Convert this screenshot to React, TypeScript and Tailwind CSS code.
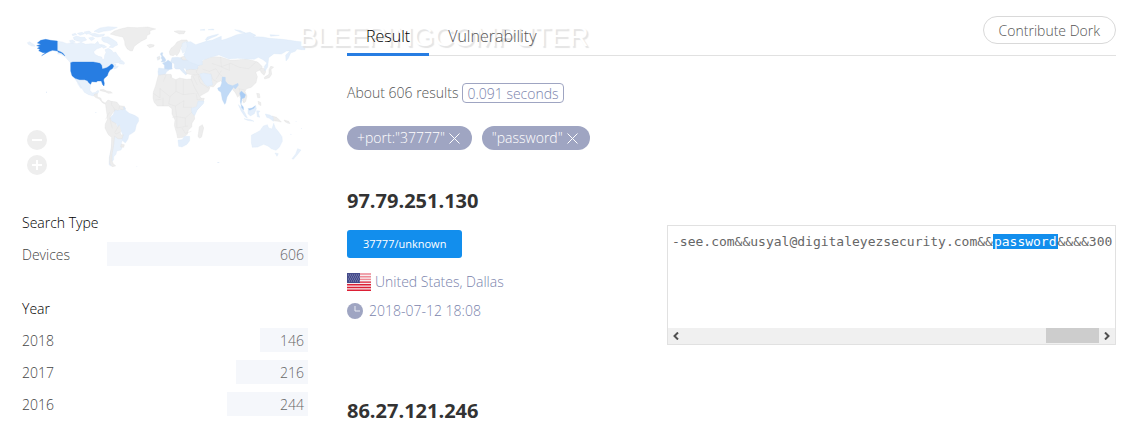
import React from "react";

const years = [
  { label: "2018", count: 146 },
  { label: "2017", count: 216 },
  { label: "2016", count: 244 },
];

const WorldMap = () => {
  return (
    <svg
      viewBox="36 30 858 450"
      className="block w-full"
      strokeLinejoin="round"
      role="img"
      aria-label="Results by country"
    >
      {/* Canada and the arctic islands */}
      <g fill="#e8f1fb" stroke="#dce8f5" strokeWidth="1">
        <path d="M143 94l14 2 14 5 14-3 16 3 12-4 14 6 16-2 12 1 8-8 5 9 10 1-4 8-14 5-9 8 3 8 12 6 9 2 3 8 5-3 1-10 4-8-3-9 10-4 10 6 6 7 6-2 6 10 7 8 4 8-8 6-11 1-8 4 11-1-1 8 8-2-4 6-9 3-3-5-6 0-7 6-12 3-8 4-2-10-7-7-18-4H186l-10-12-12-13-12-6-9-1z" />
        <path d="M190 82l10-4 12 4 12 0 6 8-14 5-14-2-10-4zM178 92l10-2 8 6-12 4zM186 73l10-3 4 4-12 3zM202 70l14-3 8 4-14 5zM222 66l16-3 6 6-16 4zM238 72l16-2 14 4 16-2-3 6-18 3-14-3zM236 84l12-3 6 5-10 6zM252 64l18-10 24-4 28 2-20 9-22 3-14 4zM276 82l18-2 14 8 12 8 3 9-8 3-6 5-12-1 6-6-12-8-10-2-6-6zM272 106l10-1 8 6-10 4z" />
        <path d="M328 157l8-6 8 8-2 4-14-2zM52 98l8-3 5 5 8 4 2 5-10-1-10-5z" />
        {/* Mexico */}
        <path d="M195 207l15 1 16 3 8 6 7 8-1 16 7 8 10-2 4-5 6 0-3 8-9 3-5 5-14-4-13-7-7-12-8-12-7-8zM200 211l5 4 10 20-3 0-8-12z" />
        {/* Brazil */}
        <path fill="#e1edfb" d="M299 325l11-12 4-13 7-2 8 2 8-4 7-4 4 10 10 8 16 6 11 7 1 10-7 12-4 18-9 7-9 5-3 12-8 12-6-5-7-6 6-12-7-15-8-8-4-11-14-7z" />
        {/* Argentina */}
        <path d="M314 374l10 2 14 12-4 11 2 15-3 6-13 3-2 10-7 7 0 9-8 9-1 10-5-4 1-22 6-28 3-22z" />
      </g>

      {/* United States */}
      <g fill="#277de2" stroke="#277de2" strokeWidth="1">
        <path d="M182 158l6-2h62l20 4 5 6 2 11 13-4 8-5 6-6 5 2 2 5-4 7-7 4-5 8-3 9-10 9-1 5 2 9-1 8-4-4-4-11-11 0-4 3-14-1-3 8-5-4-5-7-8-3-15 0-14-4-9-8-4-14z" />
        <path d="M142 93v30l-14-2-9 3-10 5-14 8 12-9-8 0-13-6 4-4-8-3 8-5-10-3 13-4-11-4 10-8 15-3 15 3zM143 122l8 3 8 5 6 8-10-8-11-4z" />
      </g>

      {/* Greenland, Iceland, Central and South America */}
      <g fill="#ededed" stroke="#dedede" strokeWidth="1">
        <path d="M301 72l12-9 18-6 22-5 30 1 30-2 24 6-17 5 0 10-9 4-2 10-14 7-12 8-10 8-6 14-7-1-9-6-6-11-1-11-5-13-16-3z" />
        <path d="M411 106l10-3 12 2-3 5-12 3zM254 252l8-1 0 10 10 3 4 10 8 4 2 4-8-3-10-12-12-5-4-5zM270 239l10-1 10 5 12 2 5 4-12 1-10-5-14-3z" />
        <path d="M286 279l8-9 10 4 16 2 9 11 14 2 3 7-8 3-8-1-7 3-8-2-7 10-8 12 3 12 14 7 4 11 8 10 4 14 7-1-4 12-12 0-10-7-3 26-5 28 0 20 4 8 7 7-11 2-7-10 0-18 5-28 1-32-10-8-10-20 1-12 6-14-1-14z" />
        <path d="M306 274l-2 10 8 10 2 10M329 287l-2 10M299 306l-12 22M299 325l8 30M328 344l-14 24 4 4 16-8M334 402l9 2-2 8-9-1z" />
      </g>

      {/* western Europe */}
      <g stroke="#d5e3f4" strokeWidth="1">
        <path fill="#c9ddf5" d="M453 128l6 0-2 7 7 8 4 7-3 5-12 1 4-6-4-6 2-5-4-6z" />
        <path fill="#eaeaea" d="M441 142l8-4 1 9-7 4z" />
        <path fill="#deebfa" d="M446 174l22 3 9 3-8 6-4 9-12 2-8-2-1-10z" />
        <path fill="#c6dcf6" d="M457 159l11-4 6-5 12 8 0 15 1 4-11 2-13-3 0-10z" />
        <path fill="#dfebf9" d="M482 155l4-12 16-1 14 2 16-6 12 3 18 12 16 3-2 10-12 2 1 9-16 3-9 4-9 0-6-9-5 0 3 6 9 10-5 4-10-10-8-8-12 0-4-4 0-12z" />
      </g>

      <g transform="translate(450 0)">
        {/* Nordics, Africa, Middle East, Asia */}
        <g fill="#ededed" stroke="#dedede" strokeWidth="1">
          <path d="M28 125l5-10 10-8 8-11 14-6 16 0 3 7-12 4-10 12-3 12-8 12-6-4-5 4-10-2zM42 64l12-2 22 1-4 8-14 1z" />
          <path d="M62 142l20-6 12 6-8 8-18 0zM78 181l14-3 26 2 6 8-6 5-18 2-20-4z" />
          <path d="M-5 196l20-3 18 0 2 10 12 6 12-5 20 4 16-1 3 7 9 24 11 19 6 8 9 0-5 14-14 18-12 13 2 17-8 12-1 12-10 9-3 13-12 9-17 2-3-14-7-24 2-16-9-18 0-16-10-8-20 0-14 0-10-12-3-12 1-18 6-16z" />
          <path d="M114 380l4-30 9-6 4 10-6 26-5 5zM94 197l22-4 7 10 15 19 12 10-5 12-26 15-8-14-10-18-7-18z" />
          <path d="M121 160l12-11 22-9 27 1 30 10 26-2 20-2 22 5 14 5 12 12-1 9-18 8 5 14-4 18-14 14-14 4-5 8 6 14-4 17-7 4-2-14-7-12-8 9-7-14-7-8-5-12-14-3-18-12-10 4-12 14-18-4-6-18-14-2-6-14-8-7z" />
          <path d="M306 174l8 2 3 10-5 10-8-8-5-10zM327 179l5-10 9 2-8 8 2 14-7 10-14 4-1-5 14-9zM290 250l8 1 2 12-7 0zM294 274l8 3 1 10-7-4zM336 318l14 4 14 14-10-2-14-2zM372 330l14 4 4 7-14-5z" />
          <path fill="none" d="M0 236l30 24 18-16 0-35M-20 250l20 14 0-30M48 244l22 10 0-46M70 254l34-4M30 260l-4 22 20 6 26-16M72 272l-2 20 26 0M46 288l4 32-14 2M50 320l26 4 20-18M50 320l0 34 34-6M66 354l10 16 18-6M76 324l0 24M9 288l0-25M-14 270l18-2M10 215l8-20M32 204l3-10M108 250l4 20 14-4M182 141l2 30 24 10 0-20M155 160l29 10 28-10 26 12 28 4 24-22M128 178l20 6 20-8 10 16 10 8M152 190l6 18 14 8M184 182l-16 26M238 236l2 28 14 14M98 197l14 28M114 196l6 22 28 18M236 236l18 4" />
        </g>

        {/* Russia, Australia, South Africa, islands */}
        <g fill="#e3eefb" stroke="#d9e7f7" strokeWidth="1">
          <path d="M80 96l12-1 15 9 13-4 18-6 20-4 18-8 8-3 0 12 14-4 16-6 14-6 16-4 26-4 18 9-8 4 28 1 20 4 18 1 22 2 22 3 20 3 25 3 0 22-10 0-14-2-5 7-14 5-7 16-7 8-1-18 13-12-10 0-16 9-22-1-16 12-3 28-8 12-2-14 8-10-12-10-14-7-12 6-24-1-26-2-26 2-30-12-26 7-24 9 0 13-12 2-10-4-14-5-12-9-8-14 8-15z" />
          <path d="M136 89l6-8 18-5 16-4-5 5-18 7-14 8zM120 60l14-2 0 3zM144 59l16-2 2 3zM224 59l18 3 14 7-16-2zM330 74l28 2-26 3z" />
          <path fill="#e9f1fa" d="M67 100l12-6 3 16-6 14-8 5-4-12z" />
          <path fill="#e7f0fb" d="M274 376l26-14 10-14 12-4 4 10 10 3 5-17 5 14 10 12 10 14 1 14-9 18-10 9-14-5-10-8-13-5-18 8-16 1-3-14zM345 429l10 2-4 8zM396 446l11-14 6-16 10 4-10 13-13 15z" />
          <path d="M54 390l12-1 8-10 15 0 0 13-8 11-15 8-10-2zM94 295l16-5 4-17 18 0-2 8-18 18-8 18-8-8zM235 284l10 9 10 16 7 15-7-4-12-18zM252 326l20 3 10 5-20-3zM264 299l14-3 9-9 2 9-6 15-12 7-7-7zM290 302l10 1-5 6 4 13-7-2zM316 312l14 3 10 7 0 12-12-9-8-3z" />
          <path d="M119 192l12-3 22 4 3 22 2 10-15 4-10-8-8-14z" />
        </g>

        {/* India, Thailand, Malaysia */}
        <g stroke="#b9d4f3" strokeWidth="1">
          <path fill="#c1daf6" d="M187 201l9 1 0 11 8 10 14 4 16-7 1 6-9 11-6-6-3 6-10 14-6 10-4 18-3 4-7-14-4-22-8-6-2-7 8-3 4-11z" />
          <path fill="#a9ccf4" d="M239 249l5-6 13 11-3 9-8 3-3 17-2-8 1-12zM243 283l7 8 1 9-6-7zM264 296l12-2 10-7-4 8-13 6z" />
        </g>
      </g>

      {/* small islands */}
      <path
        fill="#dce8f6"
        d="M108 245h3v3h-3zM832 341h4v1h-4zM856 335h5v1h-5zM840 371l6 3-4 0zM622 456h6v2h-6zM338 291l6-1 2 7-4 2zM874 355h2v2h-2zM378 470h4v1h-4zM256 306h3v2h-3z"
      />
    </svg>
  );
};

const FacetRow = ({
  label,
  count,
  total,
}: {
  label: string;
  count: number;
  total: number;
}) => {
  return (
    <li className="flex h-8 items-center">
      <a href="#" className="h-6 w-[85px] leading-[26px] text-[#444]">
        {label}
      </a>
      <div className="flex flex-1 justify-end">
        <div
          className="h-6 bg-[#f5f7fb] pr-1 text-right leading-[26px] text-[#666]"
          style={{ width: `${(count / total) * 100}%` }}
        >
          {count}
        </div>
      </div>
    </li>
  );
};

const Tag = ({ text }: { text: string }) => {
  return (
    <span className="flex h-6 items-center gap-1 rounded-full bg-[#9fa5c2] pr-3 pl-2.5 leading-[26px] text-white">
      {text}
      <button type="button" aria-label={`Remove ${text}`}>
        <svg width="11" height="11" viewBox="0 0 11 11" stroke="white" fill="none">
          <path d="M.5.5l10 10M10.5.5l-10 10" />
        </svg>
      </button>
    </span>
  );
};

const UsFlag = () => {
  return (
    <svg width="24" height="18" viewBox="0 0 24 18" aria-hidden="true">
      <rect width="24" height="18" fill="#f7eef0" />
      <path
        d="M0 1h24M0 3.7h24M0 6.4h24"
        stroke="#ee8b96"
        strokeWidth="1.4"
      />
      <path
        d="M0 9.1h24M0 11.8h24M0 14.5h24M0 17.2h24"
        stroke="#dc1f35"
        strokeWidth="1.4"
      />
      <rect width="13" height="10" fill="#444b8a" />
      <path
        d="M1 2h11M2 4h11M1 6h11M2 8h11"
        stroke="#9095bd"
        strokeDasharray="1 1"
      />
    </svg>
  );
};

const App = () => {
  return (
    <div className="flex gap-[39px] bg-white pr-5 pl-[22px] font-['Open_Sans','Noto_Sans',sans-serif] text-sm font-light">
      <aside className="w-[286px] shrink-0 pt-5">
        <div className="relative h-[186px]">
          <WorldMap />
          <div className="absolute top-[110px] left-[5px] flex flex-col gap-[5px]">
            <button
              type="button"
              aria-label="Zoom out"
              className="flex size-5 items-center justify-center rounded-full bg-[#eee]"
            >
              <span className="h-0.5 w-2.5 bg-white" />
            </button>
            <button
              type="button"
              aria-label="Zoom in"
              className="flex size-5 items-center justify-center rounded-full bg-[#eee]"
            >
              <svg width="10" height="10" viewBox="0 0 10 10" stroke="white" strokeWidth="2">
                <path d="M5 0v10M0 5h10" />
              </svg>
            </button>
          </div>
        </div>
        <section className="mb-[22px]">
          <h2 className="h-8 leading-[34px] text-black">Search Type</h2>
          <ul>
            <FacetRow label="Devices" count={606} total={606} />
          </ul>
        </section>
        <section>
          <h2 className="h-8 leading-[34px] text-black">Year</h2>
          <ul>
            {years.map((year) => (
              <FacetRow
                key={year.label}
                label={year.label}
                count={year.count}
                total={606}
              />
            ))}
          </ul>
        </section>
      </aside>

      <main className="min-w-0 flex-1">
        <header className="relative flex h-14 items-end justify-between border-b border-[#e1e1e1]">
          <span className="pointer-events-none absolute top-[21px] -left-12 font-['Liberation_Sans',sans-serif] text-[27px] leading-8 font-normal text-white [text-shadow:2px_2px_1px_#e4e4e4]">
            BLEEPINGCOMPUTER
          </span>
          <nav className="relative -mb-px flex text-base">
            <a
              href="#"
              className="h-10 border-b-3 border-[#277de2] px-[19px] leading-10 text-black"
            >
              Result
            </a>
            <a href="#" className="h-10 px-[19px] leading-10 text-[#555]">
              Vulnerability
            </a>
          </nav>
          <button
            type="button"
            className="mb-[11px] h-7 rounded-full border border-[#d9d9d9] px-[15px] leading-7 text-[#555]"
          >
            Contribute Dork
          </button>
        </header>

        <p className="mt-[27px] flex h-5 items-center gap-1 leading-[22px] text-[#555]">
          About 606 results
          <span className="h-5 rounded border border-[#9fa5c2] px-1 leading-5 text-[#7a83ac]">
            0.091 seconds
          </span>
        </p>
        <div className="mt-[23px] flex gap-2.5">
          <Tag text={'+port:"37777"'} />
          <Tag text={'"password"'} />
        </div>

        <article className="mt-9 h-[210px]">
          <h3 className="h-[30px] text-xl leading-[30px] font-bold text-[#333]">
            97.79.251.130
          </h3>
          <div className="flex">
            <div className="w-80 shrink-0 pt-[14px]">
              <button
                type="button"
                className="block h-7 rounded-[3px] bg-[#128eed] px-4 text-[11px] font-normal text-white"
              >
                37777/unknown
              </button>
              <div className="mt-[14px] flex h-5 items-center gap-1 text-[#7a83ac]">
                <UsFlag />
                United States, Dallas
              </div>
              <div className="mt-[9px] flex h-5 items-center gap-1.5 text-[#7a83ac]">
                <svg width="16" height="16" viewBox="0 0 16 16" aria-hidden="true">
                  <circle cx="8" cy="8" r="8" fill="#9fa5c2" />
                  <path d="M8 3v5h5" stroke="#e8eaf2" fill="none" />
                </svg>
                2018-07-12 18:08
              </div>
            </div>
            <div className="mt-[9px] flex h-[120px] min-w-0 flex-1 flex-col justify-between border border-[#e1e1e1]">
              <pre className="overflow-hidden pt-2 pl-1 font-['DejaVu_Sans_Mono',monospace] text-[13px] leading-4 font-normal text-[#666]">
                -see.com&amp;&amp;usyal@digitaleyezsecurity.com&amp;&amp;
                <mark className="bg-[#128eed] px-px text-white">password</mark>
                &amp;&amp;&amp;&amp;300
              </pre>
              <div className="flex h-4 items-center bg-[#f0f0f0]">
                <button
                  type="button"
                  aria-label="Scroll left"
                  className="flex w-4 justify-center"
                >
                  <svg width="6" height="8" viewBox="0 0 6 8" fill="none" stroke="#505050" strokeWidth="2">
                    <path d="M5 0.5L1.5 4 5 7.5" />
                  </svg>
                </button>
                <div className="flex h-full flex-1 justify-end">
                  <div className="h-[15px] w-[53px] bg-[#cdcdcd]" />
                </div>
                <button
                  type="button"
                  aria-label="Scroll right"
                  className="flex w-4 justify-center"
                >
                  <svg width="6" height="8" viewBox="0 0 6 8" fill="none" stroke="#505050" strokeWidth="2">
                    <path d="M1 0.5L4.5 4 1 7.5" />
                  </svg>
                </button>
              </div>
            </div>
          </div>
        </article>
        <article>
          <h3 className="h-[30px] text-xl leading-[30px] font-bold text-[#333]">
            86.27.121.246
          </h3>
        </article>
      </main>
    </div>
  );
};

export default App;
